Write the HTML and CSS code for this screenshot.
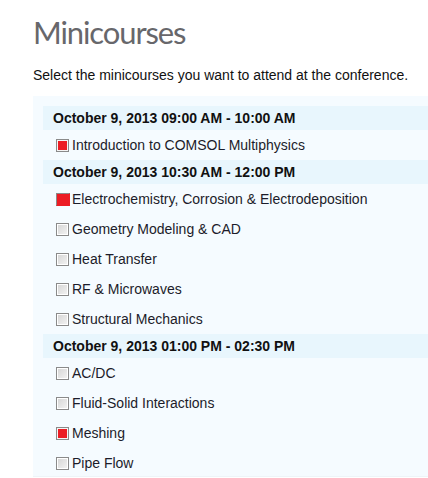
FILE: index.html
```html
<!DOCTYPE html>
<html>
<head>
<meta charset="utf-8">
<link rel="stylesheet" href="styles.css">
</head>
<body>
<div class="page">
  <h1 class="title">Minicourses</h1>
  <p class="intro">Select the minicourses you want to attend at the conference.</p>
  <div class="panel">
    <div class="slot">October 9, 2013 09:00 AM - 10:00 AM</div>
    <label class="item"><span class="cb checked"></span>Introduction to COMSOL Multiphysics</label>
    <div class="slot">October 9, 2013 10:30 AM - 12:00 PM</div>
    <label class="item"><span class="cb checked alt"></span>Electrochemistry, Corrosion &amp; Electrodeposition</label>
    <label class="item"><span class="cb"></span>Geometry Modeling &amp; CAD</label>
    <label class="item"><span class="cb"></span>Heat Transfer</label>
    <label class="item"><span class="cb"></span>RF &amp; Microwaves</label>
    <label class="item"><span class="cb"></span>Structural Mechanics</label>
    <div class="slot">October 9, 2013 01:00 PM - 02:30 PM</div>
    <label class="item"><span class="cb"></span>AC/DC</label>
    <label class="item"><span class="cb"></span>Fluid-Solid Interactions</label>
    <label class="item"><span class="cb checked"></span>Meshing</label>
    <label class="item"><span class="cb"></span>Pipe Flow</label>
  </div>
</div>
</body>
</html>
```
FILE: styles.css
```css
html, body {
  margin: 0;
  padding: 0;
  background: #ffffff;
}
.page {
  padding-left: 33px;
  font-family: "Liberation Sans", Arial, sans-serif;
}
.title {
  margin: 0;
  padding-top: 12px;
  height: 42px;
  font-family: Lato, "Open Sans", sans-serif;
  font-weight: 400;
  font-size: 31px;
  letter-spacing: -1.1px;
  line-height: 40px;
  color: #67676b;
}
.intro {
  margin: 0;
  padding-top: 13px;
  height: 29px;
  font-size: 14px;
  line-height: 16px;
  color: #111111;
}
.panel {
  background: #f5fbff;
  padding: 10px 0 0 10px;
  border-bottom: 1px solid #eef4f8;
  height: 370px;
  overflow: hidden;
}
.slot {
  height: 24px;
  line-height: 24px;
  background: #e8f6fd;
  padding-left: 10px;
  font-weight: bold;
  font-size: 14px;
  color: #111111;
}
.item {
  display: flex;
  align-items: center;
  height: 30px;
  padding-left: 13px;
  font-size: 14px;
  color: #1c1c2a;
}
.cb {
  box-sizing: border-box;
  width: 13px;
  height: 13px;
  margin-right: 3px;
  border: 1px solid #8a8a8a;
  background: linear-gradient(135deg, #d4d4d4 0%, #f4f4f4 100%);
  box-shadow: inset 0 0 0 1px #ffffff;
}
.cb.checked {
  background: #ec1c24;
  box-shadow: inset 0 0 0 1px #f5f5f5;
}
.cb.alt {
  border-color: #8a8a8a transparent transparent #8a8a8a;
  box-shadow: none;
  width: 14px;
  margin-right: 2px;
}
```
